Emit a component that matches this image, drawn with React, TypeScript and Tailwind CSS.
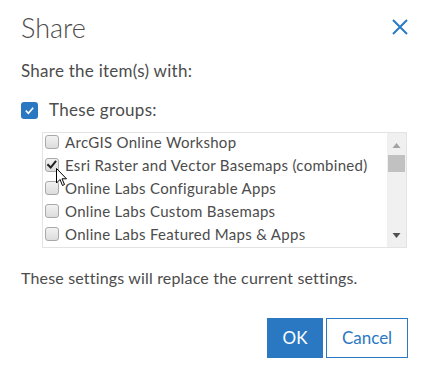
import React from "react";

const groups = [
  { name: "ArcGIS Online Workshop", checked: false },
  { name: "Esri Raster and Vector Basemaps (combined)", checked: true },
  { name: "Online Labs Configurable Apps", checked: false },
  { name: "Online Labs Custom Basemaps", checked: false },
  { name: "Online Labs Featured Maps & Apps", checked: false },
];

function SmallBox({ checked }: { checked: boolean }) {
  return (
    <div className="relative mt-[2px] w-[14px] h-[14px] shrink-0 rounded-[3px] border border-[#a9a9a9] bg-gradient-to-b from-[#f2f2f2] to-[#dcdcdc]">
      {checked && (
        <svg viewBox="0 0 14 14" className="absolute left-0 top-0 w-[12px] h-[12px]">
          <path d="M2.5 7 L5.5 10 L11 3" fill="none" stroke="#222" strokeWidth="2.4" strokeLinecap="square" />
        </svg>
      )}
    </div>
  );
}

export default function App() {
  return (
    <div
      className="w-[425px] h-[371px] bg-white text-[#4c4c4c] relative"
      style={{ fontFamily: "Lato, 'Open Sans', sans-serif" }}
    >
      <div className="px-[21px] pt-[10px]">
        <div className="flex items-start justify-between">
          <h1 className="text-[27px] font-light leading-[36px]">Share</h1>
          <button className="mt-[9px] mr-[-4px] w-[16px] h-[16px] flex items-center justify-center">
            <svg viewBox="0 0 16 16" className="w-[16px] h-[16px]">
              <path d="M1 1 L15 15 M15 1 L1 15" stroke="#2a7ac4" strokeWidth="2" fill="none" />
            </svg>
          </button>
        </div>
        <p className="mt-[15px] text-[17px] leading-[20px] tracking-[0.26px]">Share the item(s) with:</p>
        <div className="mt-[19px] h-[20px] flex items-center gap-[11px]">
          <div className="w-[17px] h-[17px] rounded-[3px] bg-[#2b78c2] flex items-center justify-center">
            <svg viewBox="0 0 12 12" className="w-[11px] h-[11px]">
              <path d="M2 6.2 L4.8 9 L10 3" fill="none" stroke="white" strokeWidth="1.8" />
            </svg>
          </div>
          <span className="text-[17px] leading-[20px] tracking-[0.3px]">These groups:</span>
        </div>
        <div className="ml-[21px] mr-[-3px] mt-[12px] h-[116px] border border-[#e3e3e3] flex">
          <div className="flex-1 pl-[2px] text-[15px] tracking-[0.3px]">
            {groups.map((g) => (
              <div key={g.name} className="flex items-start gap-[6px] h-[23px]">
                <SmallBox checked={g.checked} />
                <span className="leading-[19px] whitespace-nowrap">{g.name}</span>
              </div>
            ))}
          </div>
          <div className="w-[19px] bg-[#f0f0f0] flex flex-col items-center">
            <div className="h-[20px] flex items-center justify-center mt-[2px]">
              <svg viewBox="0 0 8 5" className="w-[9px] h-[5px]"><path d="M0 5 L4 0 L8 5 Z" fill="#a3a3a3" /></svg>
            </div>
            <div className="w-[17px] h-[17px] bg-[#c1c1c1]" />
            <div className="flex-1" />
            <div className="h-[20px] flex items-center justify-center mb-[2px]">
              <svg viewBox="0 0 8 5" className="w-[9px] h-[5px]"><path d="M0 0 L8 0 L4 5 Z" fill="#505050" /></svg>
            </div>
          </div>
        </div>
        <p className="mt-[20px] text-[16px] leading-[20px] tracking-[0.17px]">These settings will replace the current settings.</p>
        <div className="mt-[30px] flex justify-end gap-[3px] mr-[-4px]">
          <button className="w-[56px] h-[40px] bg-[#2b78c2] text-white text-[17px]">OK</button>
          <button className="w-[82px] h-[40px] border border-[#2b78c2] text-[#2b78c2] text-[17px]">Cancel</button>
        </div>
      </div>
      <svg viewBox="0 0 12 19" className="absolute left-[56px] top-[168px] w-[12px] h-[19px]">
        <path d="M0.5 0.5 L0.5 15 L4 11.5 L6.5 17.5 L8.5 16.5 L6 10.8 L10.5 10.8 Z" fill="white" stroke="black" strokeWidth="1" />
      </svg>
    </div>
  );
}
